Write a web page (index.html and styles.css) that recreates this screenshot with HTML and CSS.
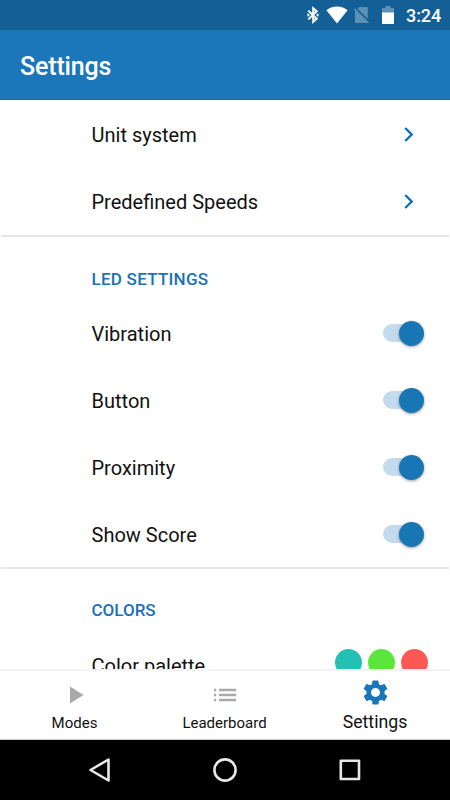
FILE: index.html
```html
<!DOCTYPE html>
<html lang="en">
<head>
<meta charset="utf-8">
<title>Settings</title>
<link rel="stylesheet" href="styles.css">
</head>
<body>
<div class="screen">
  <div class="status">
    <svg class="bt" width="12" height="18" viewBox="0 0 12 18" fill="none" stroke="#fff" stroke-width="2"><path d="M1.3 4.600 9.700 12.800 6.200 15.800V2.200L9.700 5.200 1.300 13.400"/><path d="M.4 7.700 2 9 .4 10.300M11.400 7.700 10 9l1.400 1.300" stroke-width="1.300"/></svg>
    <svg class="wifi" width="22" height="18" viewBox="0 0 22 18"><path d="M11 17.400.4 4.300C3 2.100 6.800.6 11 .6s8 1.500 10.600 3.700z" fill="#fff"/></svg>
    <svg class="sim" width="17" height="18" viewBox="0 0 17 18"><path d="M6.300 1H13.500Q14.800 1 14.800 2.300V13L4.600 2.700zM.6 3.300 1.700 2.200 16 16.500 14.900 17.600 14.200 17H3.200Q2 17 2 15.800V4.700z" fill="#5c91b8"/></svg>
    <svg class="battery" width="12" height="18" viewBox="0 0 12 18"><path d="M3.500 0h5v2H12v5H0V2h3.500z" fill="#5c91b8"/><path d="M0 6.500h12V17q0 1-1 1H1q-1 0-1-1z" fill="#fff"/></svg>
    <span class="time">3:24</span>
  </div>
  <header class="header">Settings</header>
  <main class="content">
    <section class="group first">
      <div class="row">Unit system<svg class="chevron" width="10" height="15" viewBox="0 0 10 15"><path d="M1.200 1 7.700 7.500 1.200 14"/></svg></div>
      <div class="row">Predefined Speeds<svg class="chevron" width="10" height="15" viewBox="0 0 10 15"><path d="M1.200 1 7.700 7.500 1.200 14"/></svg></div>
    </section>
    <section class="group leds">
      <h2>LED SETTINGS</h2>
      <div class="row">Vibration<span class="switch"><i></i></span></div>
      <div class="row">Button<span class="switch"><i></i></span></div>
      <div class="row">Proximity<span class="switch"><i></i></span></div>
      <div class="row">Show Score<span class="switch"><i></i></span></div>
    </section>
    <section class="group last">
      <h2>COLORS</h2>
      <div class="row">Color palette<span class="dots"><i class="teal"></i><i class="green"></i><i class="red"></i></span></div>
    </section>
  </main>
  <nav class="tabs">
    <div class="tab"><svg width="28" height="28" viewBox="0 0 28 28"><path d="M9 5.500 22.500 14 9 22.500z" fill="#a9a9a9"/></svg><span>Modes</span></div>
    <div class="tab"><svg width="28" height="28" viewBox="0 0 28 28"><path d="M3 9h2.200M8 9h17.200M3 14h2.200M8 14h17.200M3 19h2.200M8 19h17.200" stroke="#a9a9a9" stroke-width="2.600"/></svg><span>Leaderboard</span></div>
    <div class="tab active"><svg width="29" height="29" viewBox="0 0 24 24"><path fill="#1976b9" d="M19.430 12.980c.04-.32.070-.64.070-.98s-.03-.66-.07-.98l2.110-1.650c.19-.15.24-.42.120-.64l-2-3.460c-.12-.22-.39-.3-.61-.22l-2.490 1c-.52-.4-1.080-.73-1.690-.98l-.38-2.650C14.460 2.180 14.250 2 14 2h-4c-.25 0-.46.180-.49.420l-.38 2.650c-.61.250-1.170.59-1.690.980l-2.490-1c-.23-.09-.49 0-.61.220l-2 3.460c-.13.220-.07.490.120.640l2.110 1.650c-.04.320-.07.650-.07.980s.03.660.070.980l-2.110 1.650c-.19.150-.24.420-.12.640l2 3.460c.12.220.39.300.61.220l2.490-1c.52.400 1.080.730 1.690.980l.38 2.650c.03.240.240.420.490.420h4c.25 0 .46-.18.490-.42l.38-2.650c.61-.25 1.170-.59 1.690-.98l2.490 1c.23.090.490 0 .610-.22l2-3.460c.12-.22.070-.49-.12-.64l-2.110-1.650zM12 15.700c-2.040 0-3.700-1.660-3.700-3.700s1.660-3.700 3.700-3.700 3.700 1.660 3.700 3.700-1.660 3.700-3.700 3.700z"/></svg><span>Settings</span></div>
  </nav>
  <div class="sysnav">
    <svg width="26" height="26" viewBox="0 0 26 26"><path d="M3.500 13 21.500 2.500v21z"/></svg>
    <svg width="26" height="26" viewBox="0 0 26 26"><circle cx="13" cy="13" r="10.600"/></svg>
    <svg width="26" height="26" viewBox="0 0 26 26"><rect x="3.800" y="3.800" width="18.200" height="18.200"/></svg>
  </div>
</div>
</body>
</html>
```

FILE: styles.css
```css
* { box-sizing: border-box; }
body { margin: 0; font-family: Roboto, "Liberation Sans", sans-serif; color: #111; background: #fff; }
svg { display: block; flex: none; }
.screen { width: 450px; height: 800px; display: flex; flex-direction: column; overflow: hidden; }
.status { height: 30px; flex: none; background: #145f95; display: flex; align-items: center; justify-content: flex-end; padding: 0 10px 0 0; }
.wifi { margin-left: 7px; }
.sim { margin-left: 5px; }
.battery { margin-left: 12px; }
.time { margin-left: 12px; width: 34px; color: #fff; font-size: 18px; font-weight: 500; line-height: 22px; letter-spacing: -.1px; white-space: nowrap; padding-top: 1px; }
.header { height: 70px; flex: none; background: #1b77b9; color: #fff; font-size: 25px; font-weight: 500; line-height: 70px; letter-spacing: -.15px; padding: 2px 0 0 20px; border-bottom: 1px solid #0b71b7; }
.content { flex: 1; min-height: 0; overflow: hidden; }
.group { border-bottom: 2px solid #e6e6e6; margin: 0 1px; }
.group.first { height: 137px; padding-top: 1px; }
.group.leds { height: 332px; }
.group.last { border: 0; }
.row { height: 67px; display: flex; align-items: center; justify-content: space-between; padding: 0 25px 0 90.5px; font-size: 20px; }
.group h2 { margin: 0; padding: 30px 0 0 90.5px; height: 63px; font-size: 17px; line-height: 24px; font-weight: 500; letter-spacing: .25px; color: #1a71b8; }
.group.last h2 { padding-top: 29px; letter-spacing: 0; }
.chevron { margin: -1px 10px 0 0; fill: none; stroke: #1070b8; stroke-width: 2.4; }
.switch { width: 41px; height: 26px; display: flex; align-items: center; justify-content: flex-end; margin-top: -1px; }
.switch::before { content: ""; width: 32px; height: 18px; border-radius: 9px; background: #c4dbed; margin-right: -16px; }
.switch i { width: 25px; height: 25px; border-radius: 50%; background: #1976b5; box-shadow: 0 1px 3px rgba(0,0,0,.4); position: relative; }
.dots { display: flex; gap: 6px; margin: -7px -4px 0 0; }
.dots i { width: 27px; height: 27px; border-radius: 50%; }
.teal { background: #25c0b5; }
.green { background: #5ae63c; }
.red { background: #fd5954; }
.tabs { height: 71px; flex: none; display: flex; border-top: 2px solid #f3f3f3; border-bottom: 1px solid #ccc; background: #fff; }
.tab { flex: 1; display: flex; flex-direction: column; align-items: center; padding-top: 10px; font-size: 15px; }
.tab span { line-height: 20px; margin: 4px 1px 0 0; }
.tab.active { padding-top: 7px; font-size: 17.7px; }
.tab.active span { margin: 5px 0 0; }
.sysnav { height: 60px; flex: none; background: #000; display: flex; justify-content: center; align-items: center; gap: 99px; }
.sysnav svg { fill: none; stroke: #e8e8e8; stroke-width: 2.6; stroke-linejoin: round; }
```
